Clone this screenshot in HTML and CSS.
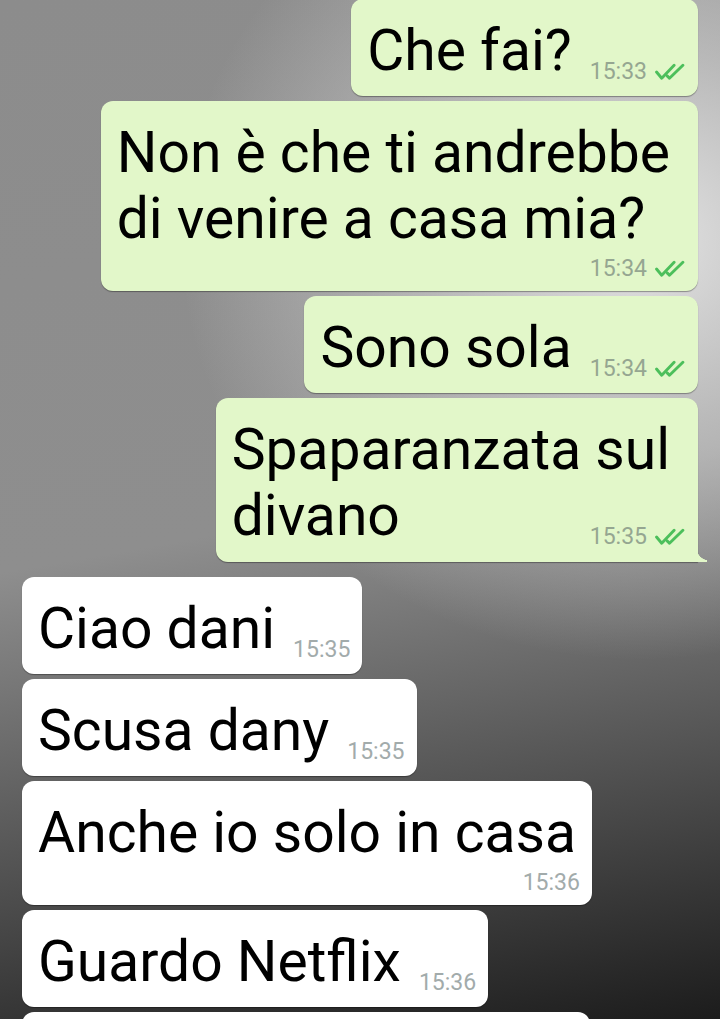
FILE: index.html
```html
<!DOCTYPE html>
<html lang="it">
<head>
    <meta charset="UTF-8">
    <meta name="viewport" content="width=device-width, initial-scale=1.0">
    <title>Chat</title>
    <link rel="stylesheet" href="styles.css">
</head>
<body>
    <div class="chat">
        <div class="bubble out inline">
            <div class="text">Che fai?</div>
            <div class="meta">15:33 <svg class="ticks" viewBox="0 0 30 17"><path d="M1.5 8.5 L6.5 14.5 L18.5 2 M12 12.5 L14 14.5 L27 2"/></svg></div>
        </div>

        <div class="bubble out stack">
            <div class="text">Non è che ti andrebbe<br>di venire a casa mia?</div>
            <div class="meta">15:34 <svg class="ticks" viewBox="0 0 30 17"><path d="M1.5 8.5 L6.5 14.5 L18.5 2 M12 12.5 L14 14.5 L27 2"/></svg></div>
        </div>

        <div class="bubble out inline">
            <div class="text">Sono sola</div>
            <div class="meta">15:34 <svg class="ticks" viewBox="0 0 30 17"><path d="M1.5 8.5 L6.5 14.5 L18.5 2 M12 12.5 L14 14.5 L27 2"/></svg></div>
        </div>

        <div class="bubble out overlay tail">
            <div class="text">Spaparanzata sul<br>divano</div>
            <div class="meta">15:35 <svg class="ticks" viewBox="0 0 30 17"><path d="M1.5 8.5 L6.5 14.5 L18.5 2 M12 12.5 L14 14.5 L27 2"/></svg></div>
        </div>

        <div class="bubble in inline first">
            <div class="text">Ciao dani</div>
            <div class="meta">15:35</div>
        </div>

        <div class="bubble in inline">
            <div class="text">Scusa dany</div>
            <div class="meta">15:35</div>
        </div>

        <div class="bubble in stack">
            <div class="text">Anche io solo in casa</div>
            <div class="meta">15:36</div>
        </div>

        <div class="bubble in inline">
            <div class="text">Guardo Netflix</div>
            <div class="meta">15:36</div>
        </div>

        <div class="bubble in cut"></div>
    </div>
</body>
</html>
```

FILE: styles.css
```css
body {
    margin: 0;
    height: 1019px;
    overflow: hidden;
    font-family: Roboto, "Noto Sans", Arial, sans-serif;
    background:
        radial-gradient(ellipse 460px 420px at 640px 240px, rgba(232, 232, 232, 0.95) 0%, rgba(215, 215, 215, 0.6) 45%, rgba(200, 200, 200, 0) 100%),
        linear-gradient(170deg, #8c8c8c 0%, #8e8e8e 50%, #5c5c5c 72%, #1c1c1c 100%);
}

.chat {
    display: flex;
    flex-direction: column;
    gap: 5px;
    margin-top: -1px;
    padding: 0 22px;
}

.bubble {
    position: relative;
    padding: 19px 12px 12px 16px;
    border-radius: 12px;
    box-shadow: 0 1px 1px rgba(0, 0, 0, 0.35);
    color: #000;
}

.bubble.out {
    align-self: flex-end;
    background-color: #e2f7c9;
}

.bubble.in {
    align-self: flex-start;
    background-color: #fff;
}

.bubble.first {
    margin-top: 10px;
}

.text {
    font-size: 57px;
    line-height: 66px;
    white-space: nowrap;
}

.out .text {
    margin-right: 16px;
}

.in .text {
    margin-right: 4px;
}

.meta {
    display: flex;
    align-items: center;
    gap: 8px;
    font-size: 23px;
    line-height: 24px;
    white-space: nowrap;
}

.out .meta {
    color: #95a691;
}

.in .meta {
    color: #a2abab;
}

.ticks {
    width: 31px;
    height: 18px;
    fill: none;
    stroke: #4cbf5b;
    stroke-width: 2.8;
    stroke-linecap: round;
    stroke-linejoin: round;
}

/* time on the same line as the message */
.bubble.inline {
    display: flex;
    align-items: flex-end;
}

.bubble.inline .text {
    margin-right: 0;
}

.bubble.inline .meta {
    margin-left: 18px;
}

/* time on its own line */
.bubble.stack {
    display: flex;
    flex-direction: column;
    padding-bottom: 10px;
}

.bubble.stack .meta {
    align-self: flex-end;
    margin-top: 5px;
}

/* time sits under the last short line */
.bubble.overlay {
    display: grid;
    padding-bottom: 13px;
}

.bubble.overlay .text,
.bubble.overlay .meta {
    grid-area: 1 / 1;
}

.bubble.overlay .meta {
    justify-self: end;
    align-self: end;
}

.bubble.tail {
    border-bottom-right-radius: 0;
}

.bubble.tail::after {
    content: "";
    position: absolute;
    right: -9px;
    bottom: 0;
    width: 10px;
    height: 14px;
    background: radial-gradient(circle at 12px 0, transparent 12px, #e2f7c9 12.5px);
}

.bubble.cut {
    width: 540px;
    height: 70px;
}
```
